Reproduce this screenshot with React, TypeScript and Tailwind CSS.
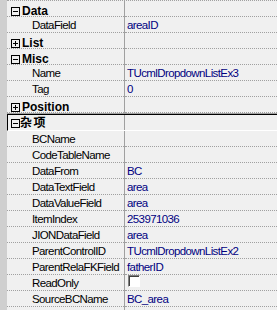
import React from 'react';

type Row =
  | { kind: 'cat'; label: string; open: boolean }
  | { kind: 'prop'; name: string; value?: string; check?: boolean };

const topRows: Row[] = [
  { kind: 'cat', label: 'Data', open: true },
  { kind: 'prop', name: 'DataField', value: 'areaID' },
  { kind: 'cat', label: 'List', open: false },
  { kind: 'cat', label: 'Misc', open: true },
  { kind: 'prop', name: 'Name', value: 'TUcmlDropdownListEx3' },
  { kind: 'prop', name: 'Tag', value: '0' },
  { kind: 'cat', label: 'Position', open: false },
];

const miscRows: Row[] = [
  { kind: 'prop', name: 'BCName', value: '' },
  { kind: 'prop', name: 'CodeTableName', value: '' },
  { kind: 'prop', name: 'DataFrom', value: 'BC' },
  { kind: 'prop', name: 'DataTextField', value: 'area' },
  { kind: 'prop', name: 'DataValueField', value: 'area' },
  { kind: 'prop', name: 'ItemIndex', value: '253971036' },
  { kind: 'prop', name: 'JIONDataField', value: 'area' },
  { kind: 'prop', name: 'ParentControlID', value: 'TUcmlDropdownListEx2' },
  { kind: 'prop', name: 'ParentRelaFKField', value: 'fatherID' },
  { kind: 'prop', name: 'ReadOnly', check: true },
  { kind: 'prop', name: 'SourceBCName', value: 'BC_area' },
];

function ToggleBox({ open }: { open: boolean }) {
  return (
    <svg width="9" height="9" viewBox="0 0 9 9" className="shrink-0">
      <rect x="0.5" y="0.5" width="8" height="8" fill="none" stroke="#000" />
      <line x1="2" y1="4.5" x2="7" y2="4.5" stroke="#000" />
      {!open && <line x1="4.5" y1="2" x2="4.5" y2="7" stroke="#000" />}
    </svg>
  );
}

function GridRow({ row }: { row: Row }) {
  if (row.kind === 'cat') {
    return (
      <div className="flex h-[16px]">
        <div className="w-[117px] flex items-start pl-[4px] border-b border-dotted border-[#a0a0a0]">
          <div className="mt-[6px]">
            <ToggleBox open={row.open} />
          </div>
          <span className="ml-[2px] leading-[15px] pt-[3px] text-[12px] font-bold text-black whitespace-nowrap">{row.label}</span>
        </div>
        <div className="w-px bg-[#a0a0a0]" />
        <div className="flex-1 border-b border-dotted border-[#a0a0a0]" />
      </div>
    );
  }
  return (
    <div className="flex h-[16px]">
      <div className="w-[117px] pl-[25px] pt-[1px] leading-[15px] tracking-[-0.6px] text-black whitespace-nowrap overflow-hidden border-b border-dotted border-[#a0a0a0]">
        {row.name}
      </div>
      <div className="w-px bg-[#a0a0a0]" />
      <div className="flex-1 pl-[2px] pt-[1px] leading-[15px] tracking-[-0.6px] text-[#000080] whitespace-nowrap overflow-hidden border-b border-dotted border-[#a0a0a0]">
        {row.check ? (
          <div className="-mt-px ml-[1px] w-[12px] h-[12px] bg-white border border-t-[#808080] border-l-[#808080] border-b-[#ffffff] border-r-[#ffffff] shadow-[inset_1px_1px_0_#404040]" />
        ) : (
          row.value
        )}
      </div>
    </div>
  );
}

export default function App() {
  return (
    <div className="w-[277px] h-[310px] flex bg-[#f0f0f0] overflow-hidden font-['Liberation_Sans',Arial,sans-serif] text-[11.5px]">
      {/* left margin */}
      <div className="w-[7px] bg-[#cfcfcf]" />

      <div className="flex-1 flex flex-col">
        <div className="border-t border-dotted border-[#a0a0a0]" />
        {topRows.map((r, i) => (
          <GridRow key={i} row={r} />
        ))}

        {/* selected category row */}
        <div className="border-t border-[#a0a0a0]">
          <div className="flex h-[17px] border-t border-l border-b border-t-black border-l-black border-b-white">
            <div className="w-[116px] flex items-start pl-[3px]">
              <div className="mt-[4px]">
                <ToggleBox open />
              </div>
              <span className="-mt-px leading-[15px] font-bold text-[12px] tracking-[1.5px] text-black font-['Noto_Sans_CJK_SC',sans-serif]">杂项</span>
            </div>
            <div className="w-px bg-[#a0a0a0]" />
            <div className="flex-1" />
          </div>
        </div>

        {miscRows.map((r, i) => (
          <GridRow key={i} row={r} />
        ))}

        <div className="flex-1 flex">
          <div className="w-[117px]" />
          <div className="w-px bg-[#a0a0a0]" />
          <div className="flex-1" />
        </div>
      </div>
    </div>
  );
}
